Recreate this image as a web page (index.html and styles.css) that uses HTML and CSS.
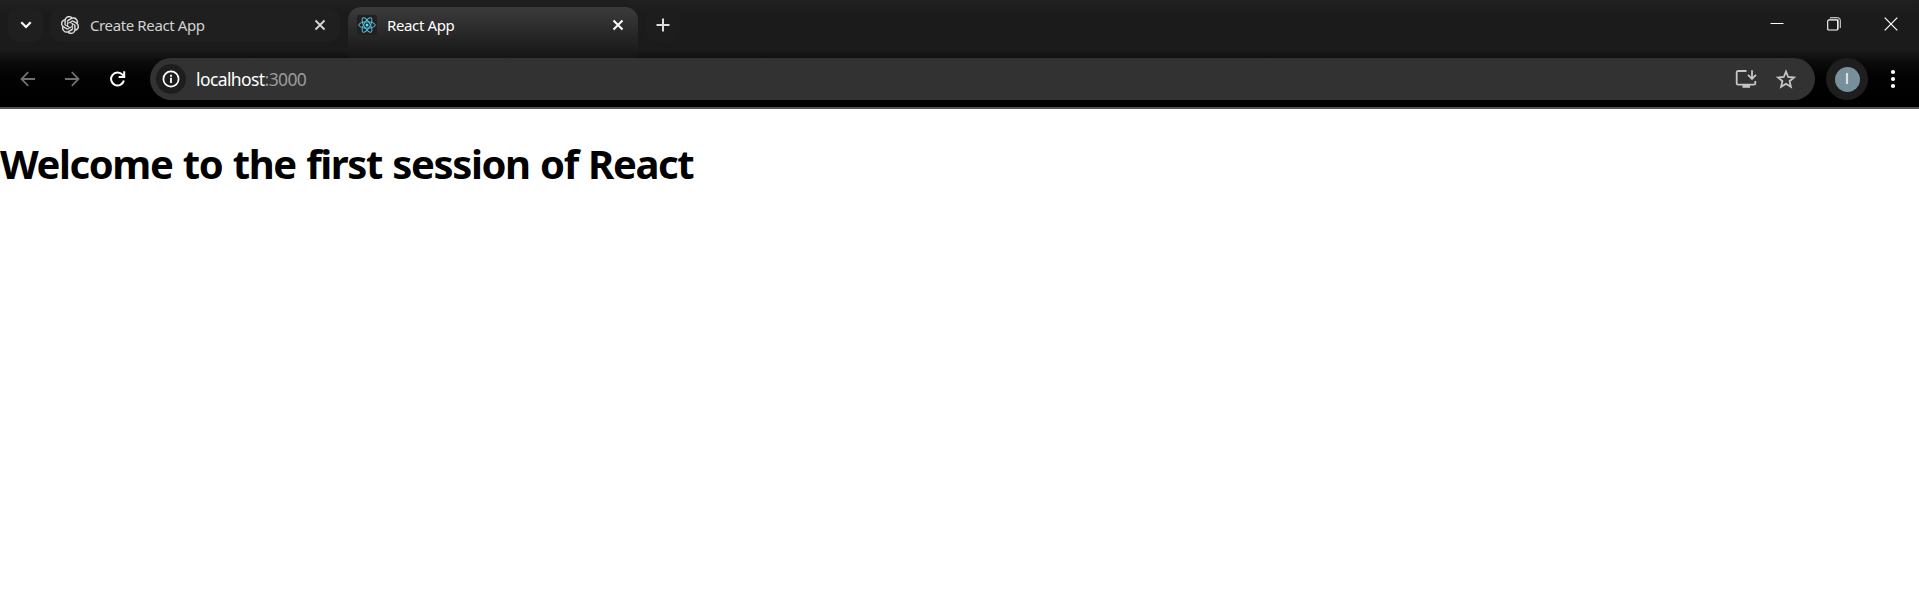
FILE: index.html
```
<!DOCTYPE html>
<html lang="en">
<head>
<meta charset="utf-8">
<title>React App</title>
<link rel="stylesheet" href="styles.css">
</head>
<body>
<header class="browser">
  <div class="tabstrip">
    <button class="chip" aria-label="Search tabs"><svg width="12" height="8" viewBox="0 0 12 8"><path d="M1.3 1.300 6 6l4.700-4.700" fill="none" stroke="#fff" stroke-width="2.2"/></svg></button>
    <div class="tab">
      <svg class="favicon-ai" viewBox="0 0 24 24"><path fill="#e8e8e8" stroke="#e8e8e8" stroke-width=".3" d="M22.2819 9.8211a5.9847 5.9847 0 0 0-.5157-4.9108 6.0462 6.0462 0 0 0-6.5098-2.9A6.0651 6.0651 0 0 0 4.9807 4.1818a5.9847 5.9847 0 0 0-3.9977 2.9 6.0462 6.0462 0 0 0 .7427 7.0966 5.98 5.98 0 0 0 .511 4.9107 6.051 6.051 0 0 0 6.5146 2.9001A5.9847 5.9847 0 0 0 13.2599 24a6.0557 6.0557 0 0 0 5.7718-4.2058 5.9894 5.9894 0 0 0 3.9977-2.9001 6.0557 6.0557 0 0 0-.7475-7.0729zm-9.022 12.6081a4.4755 4.4755 0 0 1-2.8764-1.0408l.1419-.0804 4.7783-2.7582a.7948.7948 0 0 0 .3927-.6813v-6.7369l2.02 1.1686a.071.071 0 0 1 .038.052v5.5826a4.504 4.504 0 0 1-4.4945 4.4944zm-9.6607-4.1254a4.4708 4.4708 0 0 1-.5346-3.0137l.142.0852 4.783 2.7582a.7712.7712 0 0 0 .7806 0l5.8428-3.3685v2.3324a.0804.0804 0 0 1-.0332.0615L9.74 19.9502a4.4992 4.4992 0 0 1-6.1408-1.6464zM2.3408 7.8956a4.485 4.485 0 0 1 2.3655-1.9728V11.6a.7664.7664 0 0 0 .3879.6765l5.8144 3.3543-2.0201 1.1685a.0757.0757 0 0 1-.071 0l-4.8303-2.7865A4.504 4.504 0 0 1 2.3408 7.872zm16.5963 3.8558L13.1038 8.364 15.1192 7.2a.0757.0757 0 0 1 .071 0l4.8303 2.7913a4.4944 4.4944 0 0 1-.6765 8.1042v-5.6772a.79.79 0 0 0-.407-.667zm2.0107-3.0231l-.142-.0852-4.7735-2.7818a.7759.7759 0 0 0-.7854 0L9.409 9.2297V6.8974a.0662.0662 0 0 1 .0284-.0615l4.8303-2.7866a4.4992 4.4992 0 0 1 6.6802 4.66zM8.3065 12.863l-2.02-1.1638a.0804.0804 0 0 1-.038-.0567V6.0742a4.4992 4.4992 0 0 1 7.3757-3.4537l-.142.0805L8.704 5.459a.7948.7948 0 0 0-.3927.6813zm1.0976-2.3654l2.602-1.4998 2.6069 1.4998v2.9994l-2.5974 1.4997-2.6067-1.4997Z"/></svg>
      <span class="tab-title">Create React App</span>
      <svg class="close" width="12" height="12" viewBox="0 0 12 12"><path d="m1.5 1.5 9 9m0-9-9 9" stroke="#d8d8d8" stroke-width="1.8"/></svg>
    </div>
    <div class="tab tab-active">
      <span class="favicon-react"><svg width="18" height="18" viewBox="-12 -12 24 24" fill="none" stroke="#58c4dc" stroke-width="1.3"><circle r="2" fill="#61dafb" stroke="none"/><ellipse rx="11" ry="4.2"/><ellipse rx="11" ry="4.2" transform="rotate(60)"/><ellipse rx="11" ry="4.2" transform="rotate(120)"/></svg></span>
      <span class="tab-title tab-title-active">React App</span>
      <svg class="close" width="12" height="12" viewBox="0 0 12 12"><path d="m1.5 1.5 9 9m0-9-9 9" stroke="#fff" stroke-width="2"/></svg>
    </div>
    <button class="chip chip-new" aria-label="New tab"><svg width="14" height="14" viewBox="0 0 14 14"><path d="M7 .5v13M.5 7h13" stroke="#dcdcdc" stroke-width="2"/></svg></button>
    <div class="window-controls">
      <svg width="14" height="14" viewBox="0 0 14 14"><path d="M.5 6.5h13" stroke="#fff"/></svg>
      <svg width="14" height="14" viewBox="0 0 14 14" fill="none"><path d="M3 .7h7.8a2.5 2.5 0 0 1 2.5 2.5V11" stroke="#e0e0e0"/><path d="M1.5 2.5h9.8v10" stroke="#8a8a8a" stroke-width="1.5"/><rect x=".7" y="3" width="10" height="10" rx="1" stroke="#fff" stroke-width="1.1"/></svg>
      <svg width="14" height="14" viewBox="0 0 14 14"><path d="m.7.7 12.6 12.6M13.3.7.7 13.3" stroke="#fff" stroke-width="1.2"/></svg>
    </div>
  </div>
  <div class="toolbar">
    <nav class="nav">
      <svg width="16" height="16" viewBox="0 0 16 16" fill="none" stroke="#707070" stroke-width="1.8"><path d="M15 8H2M8.2 1.2 1.5 8l6.7 6.800"/></svg>
      <svg width="16" height="16" viewBox="0 0 16 16" fill="none" stroke="#707070" stroke-width="1.8"><path d="M0 8h13M6.800 1.200 13.500 8l-6.700 6.800"/></svg>
      <svg width="16" height="16" viewBox="0 0 16 16" fill="none" stroke="#fff" stroke-width="2"><path d="M13.9 9.6A6.500 6.500 0 1 1 12.5 3.7L14 5.4M14.200 .3v5.600H8.600"/></svg>
    </nav>
    <div class="omnibox">
      <span class="site-info"><svg width="18" height="18" viewBox="0 0 18 18"><circle cx="9" cy="9" r="7.6" fill="none" stroke="#fff" stroke-width="1.7"/><path d="M9 7.8V13M9 4.8v1.9" stroke="#fff" stroke-width="1.8"/></svg></span>
      <span class="url">localhost<span class="port">:3000</span></span>
      <svg class="install" width="22" height="20" viewBox="0 0 22 20" fill="none" stroke="#c5c5c5" stroke-width="1.8"><path d="M11.500 2H3A1.300 1.300 0 0 0 1.700 3.300v11A1.300 1.300 0 0 0 3 15.600h16a1.300 1.300 0 0 0 1.300-1.300V12"/><path d="M17 1.200v8.600m-4-3.900 4 4 4-4"/><path d="M7.500 17.300h7.500" stroke-width="3"/></svg>
      <svg class="star" width="20" height="20" viewBox="0 0 20 20" fill="none" stroke="#c5c5c5" stroke-width="1.800"><path d="m10 2.700 2.200 5.300 5.700.5-4.300 3.700 1.300 5.600-4.900-3-4.900 3 1.300-5.600L2.100 8.500 7.800 8z"/></svg>
    </div>
    <span class="profile"><span class="avatar">I</span></span>
    <svg class="menu" width="6" height="20" viewBox="0 0 6 20" fill="#fff"><circle cx="3" cy="3" r="2.1"/><circle cx="3" cy="10" r="2.1"/><circle cx="3" cy="17" r="2.1"/></svg>
  </div>
</header>
<main><h1 class="heading">Welcome to the first session of React</h1></main>
</body>
</html>
```
FILE: styles.css
```
* { box-sizing: border-box; }
body { margin: 0; background: #fff; font-family: "Noto Sans", "Open Sans", sans-serif; }
svg { display: block; flex: none; }
.browser {
  height: 109px;
  border-bottom: 2px solid #575355;
  background: linear-gradient(#202020 0, #1b1b1b 14px, #1b1b1b 50px, #0c0c0c 61px, #030303 74px, #000 100px);
}
.tabstrip { display: flex; align-items: flex-start; height: 58px; padding: 8px 15px 0 8px; }
.chip {
  display: flex; align-items: center; justify-content: center;
  width: 35px; height: 34px; padding: 0; border: 0; border-radius: 11px;
  background: #1f1f1f;
}
.tab {
  display: flex; align-items: center;
  width: 290px; height: 34px; margin-left: 7px; padding: 0 14px 0 11px;
  border-radius: 12px; background: #1f1f1f;
}
.tab-active {
  align-items: flex-start;
  height: 51px; margin: -1px 0 0 8px; padding: 8px 14px 0 9px;
  border-radius: 13px 13px 0 0;
  background: linear-gradient(#3b3b3b, #272727 28px, #151515);
}
.tab-active .close { margin-top: 4px; }
.favicon-ai { width: 18px; height: 18px; }
.favicon-react {
  display: flex; align-items: center; justify-content: center;
  width: 20px; height: 20px; border-radius: 2px; background: #202020;
}
.tab-title { flex: 1; margin-left: 11px; color: #d2d2d2; font-size: 15px; line-height: 20px; letter-spacing: -.38px; }
.tab-title-active { margin-left: 10px; color: #fff; }
.chip-new { margin-left: 7px; background: #1d1d1d; }
.window-controls { display: flex; gap: 43px; margin: 9px 6px 0 auto; }
.toolbar { display: flex; align-items: center; height: 42px; padding: 0 23px 0 20px; }
.nav { display: flex; gap: 29px; margin-right: 24px; }
.omnibox { display: flex; align-items: center; flex: 1; height: 42px; padding: 0 19px 0 6px; border-radius: 21px; background: #323232; }
.site-info { display: flex; align-items: center; justify-content: center; width: 30px; height: 30px; border-radius: 50%; background: #1e1e1e; }
.url { margin-left: 10px; color: #fff; font-size: 17.5px; letter-spacing: -.6px; }
.port { color: #9b9b9b; }
.install { margin-left: auto; }
.star { margin-left: 19px; }
.profile { display: flex; align-items: center; justify-content: center; width: 42px; height: 42px; margin: 0 22px 0 11px; border-radius: 50%; background: #1e1e1e; }
.avatar { display: flex; align-items: center; justify-content: center; width: 25px; height: 25px; border-radius: 50%; background: #78909c; color: #fff; font: 14px "Roboto", sans-serif; }
.heading { margin: 28px 0 0; font-size: 40px; line-height: 54px; font-weight: 700; letter-spacing: -1.4px; word-spacing: 1.4px; white-space: nowrap; }
```
